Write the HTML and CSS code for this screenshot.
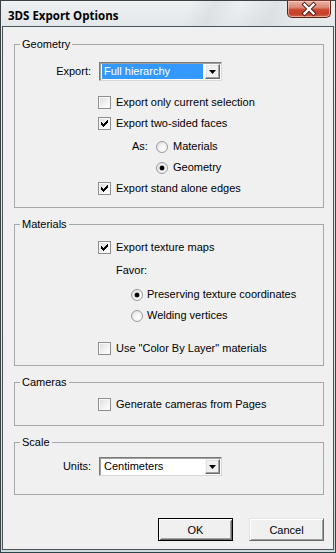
FILE: index.html
```html
<!DOCTYPE html>
<html>
<head>
<meta charset="utf-8">
<title>3DS Export Options</title>
<link rel="stylesheet" href="styles.css">
</head>
<body>
<div class="window">
  <div class="titlebar">
    <span class="title">3DS Export Options</span>
    <span class="close">
      <svg width="42" height="16" viewBox="0 0 42 16">
        <path d="M16.5 3.5 L25.5 12.5 M25.5 3.5 L16.5 12.5" stroke="#4a1a12" stroke-width="4.2" stroke-linecap="square"/>
        <path d="M16.5 3.5 L25.5 12.5 M25.5 3.5 L16.5 12.5" stroke="#ffffff" stroke-width="2.4" stroke-linecap="square"/>
      </svg>
    </span>
  </div>
  <div class="client">
    <fieldset class="group geom">
      <legend>Geometry</legend>
      <div class="combo-row first">
        <span class="lbl">Export:</span>
        <span class="combo">
          <span class="combo-text selected">Full hierarchy</span>
          <span class="combo-btn"><svg width="7" height="4" viewBox="0 0 7 4"><path d="M0 0 H7 L3.5 4 Z" fill="#000"/></svg></span>
        </span>
      </div>
      <div class="row ind-check gap11"><span class="cb"></span><span class="txt">Export only current selection</span></div>
      <div class="row ind-check"><span class="cb checked"><svg width="7" height="7" viewBox="0 0 7 7" shape-rendering="crispEdges"><path d="M6 0h1v1h-1z M5 1h2v1h-2z M0 2h1v1h-1z M4 2h3v1h-3z M0 3h2v1h-2z M3 3h3v1h-3z M0 4h5v1h-5z M1 5h3v1h-3z M2 6h1v1h-1z" fill="#000"/></svg></span><span class="txt">Export two-sided faces</span></div>
      <div class="row ind-as gap2"><span class="as">As:</span><span class="rb"></span><span class="txt">Materials</span></div>
      <div class="row ind-rb2"><span class="rb on"></span><span class="txt">Geometry</span></div>
      <div class="row ind-check"><span class="cb checked"><svg width="7" height="7" viewBox="0 0 7 7" shape-rendering="crispEdges"><path d="M6 0h1v1h-1z M5 1h2v1h-2z M0 2h1v1h-1z M4 2h3v1h-3z M0 3h2v1h-2z M3 3h3v1h-3z M0 4h5v1h-5z M1 5h3v1h-3z M2 6h1v1h-1z" fill="#000"/></svg></span><span class="txt">Export stand alone edges</span></div>
    </fieldset>

    <fieldset class="group mats">
      <legend>Materials</legend>
      <div class="row ind-check gap6"><span class="cb checked"><svg width="7" height="7" viewBox="0 0 7 7" shape-rendering="crispEdges"><path d="M6 0h1v1h-1z M5 1h2v1h-2z M0 2h1v1h-1z M4 2h3v1h-3z M0 3h2v1h-2z M3 3h3v1h-3z M0 4h5v1h-5z M1 5h3v1h-3z M2 6h1v1h-1z" fill="#000"/></svg></span><span class="txt">Export texture maps</span></div>
      <div class="row ind-favor gap2"><span>Favor:</span></div>
      <div class="row ind-pres gap3"><span class="rb on"></span><span class="txt rtxt">Preserving texture coordinates</span></div>
      <div class="row ind-pres"><span class="rb"></span><span class="txt rtxt">Welding vertices</span></div>
      <div class="row ind-check gap12"><span class="cb"></span><span class="txt">Use "Color By Layer" materials</span></div>
    </fieldset>

    <fieldset class="group cams">
      <legend>Cameras</legend>
      <div class="row ind-check gap5"><span class="cb"></span><span class="txt">Generate cameras from Pages</span></div>
    </fieldset>

    <fieldset class="group scale">
      <legend>Scale</legend>
      <div class="combo-row second">
        <span class="lbl">Units:</span>
        <span class="combo">
          <span class="combo-text">Centimeters</span>
          <span class="combo-btn"><svg width="7" height="4" viewBox="0 0 7 4"><path d="M0 0 H7 L3.5 4 Z" fill="#000"/></svg></span>
        </span>
      </div>
    </fieldset>

    <div class="buttons">
      <button class="btn default">OK</button>
      <button class="btn">Cancel</button>
    </div>
  </div>
</div>
</body>
</html>
```

FILE: styles.css
```css
* { box-sizing: border-box; }
html, body { margin: 0; padding: 0; }
body {
  width: 336px;
  height: 553px;
  overflow: hidden;
  font-family: "Liberation Sans", Arial, sans-serif;
  font-size: 11px;
  color: #000;
  background: #fff;
}
.window {
  width: 336px;
  height: 553px;
  border: 1px solid #3a4246;
  display: flex;
  flex-direction: column;
  background: linear-gradient(180deg, #e9ecee 0%, #dfe4e7 60%, #cfdadd 100%);
  border-right-color: #2e4a4e;
  border-bottom-color: #2b4448;
}
.titlebar {
  height: 25px;
  flex: none;
  display: flex;
  justify-content: space-between;
  align-items: flex-start;
  padding-left: 7px;
  background:
    linear-gradient(115deg, rgba(255,255,255,0) 55%, rgba(200,205,210,0.35) 62%, rgba(255,255,255,0) 70%, rgba(190,198,204,0.3) 80%, rgba(255,255,255,0) 88%),
    linear-gradient(180deg, #eef0f2 0%, #e4e8eb 100%);
}
.title {
  font-family: "Open Sans", "Noto Sans", sans-serif;
  font-weight: 700;
  font-size: 11.5px;
  line-height: 16px;
  margin-top: 7px;
  color: #000;
}
.close {
  width: 44px;
  height: 18px;
  margin-top: -1px;
  margin-right: 4px;
  border: 1px solid #5e2218;
  border-top: 1px solid #7a3a30;
  border-radius: 0 0 5px 5px;
  background: linear-gradient(180deg, #eab3a6 0%, #dc8a78 40%, #c9472f 55%, #c4402a 80%, #d2664f 100%);
  box-shadow: inset 0 0 0 1px rgba(255,220,210,0.55);
  display: flex;
  align-items: center;
  justify-content: center;
}
.close svg { display: block; }
.client {
  flex: 1;
  margin: 0 1px 2px 1px;
  border: 1px solid #4b5357;
  background: #f0f0f0;
  display: flex;
  flex-direction: column;
}
.group {
  margin: 10px 9px 0 11px;
  padding: 0;
  border: 1px solid #a7a7a7;
  min-width: 0;
}
.group.geom { margin-top: 11px; padding-bottom: 8px; }
.group.mats { padding-bottom: 6px; }
.group.cams { padding-bottom: 10px; }
.group.scale { padding-bottom: 18px; }
legend {
  margin-left: 5px;
  padding: 0 2px;
  line-height: 13px;
  font-size: 11px;
}
.row {
  height: 21px;
  display: flex;
  align-items: center;
  line-height: 13px;
  white-space: nowrap;
}
.gap2 { margin-top: 2px; }
.gap3 { margin-top: 3px; }
.gap5 { margin-top: 5px; }
.gap6 { margin-top: 6px; }
.gap11 { margin-top: 11px; }
.gap12 { margin-top: 12px; }
.ind-check { padding-left: 83px; }
.ind-as { padding-left: 117px; }
.ind-rb2 { padding-left: 141px; }
.ind-favor { padding-left: 101px; }
.ind-pres { padding-left: 116px; }
.as { width: 24px; }
.txt { margin-left: 5px; }
.rtxt { margin-left: 4px; }
.cb {
  width: 13px;
  height: 13px;
  flex: none;
  border: 1px solid #8e8f8f;
  background: linear-gradient(135deg, #dcdcdc 0%, #f3f3f3 60%, #ffffff 100%);
  box-shadow: inset 1px 1px 0 #f8f8f8, inset -1px -1px 0 #f8f8f8;
  display: flex;
  align-items: center;
  justify-content: center;
}
.cb svg { display: block; }
.rb {
  width: 12px;
  height: 12px;
  flex: none;
  border-radius: 50%;
  border: 1px solid #9a9a9a;
  background: radial-gradient(circle at 65% 65%, #ffffff 0%, #f2f2f2 45%, #d8d8d8 100%);
  display: flex;
  align-items: center;
  justify-content: center;
}
.rb.on::after {
  content: "";
  width: 4px;
  height: 4px;
  border-radius: 50%;
  background: #000;
  box-shadow: 0 0 0 0.5px #333;
}
.combo-row {
  display: flex;
  align-items: center;
  height: 19px;
}
.combo-row.first { margin-top: 11px; }
.combo-row.second { margin-top: 8px; }
.lbl {
  width: 76px;
  text-align: right;
  margin-right: 8px;
  line-height: 13px;
}
.combo {
  width: 123px;
  height: 19px;
  border: 1px solid;
  border-color: #7a7a7a #d8d8d8 #d8d8d8 #7a7a7a;
  box-shadow: inset 1px 1px 0 #a0a0a0;
  background: #fff;
  display: flex;
  align-items: stretch;
  padding: 1px 1px 1px 1px;
}
.combo-text {
  flex: 1;
  padding-left: 2px;
  margin-left: 1px;
  line-height: 15px;
  white-space: nowrap;
  overflow: hidden;
}
.combo-text.selected {
  background: #3399ff;
  color: #fff;
  margin-right: 2px;
}
.combo-btn {
  width: 15px;
  flex: none;
  background: #f0f0f0;
  border: 1px solid;
  border-color: #f8f8f8 #696969 #696969 #f8f8f8;
  box-shadow: inset -1px -1px 0 #a0a0a0, inset 1px 1px 0 #e3e3e3;
  display: flex;
  align-items: center;
  justify-content: center;
}
.combo-btn svg { display: block; }
.buttons {
  display: flex;
  justify-content: flex-end;
  gap: 16px;
  margin-top: 23px;
  padding-right: 9px;
}
.btn {
  width: 75px;
  height: 23px;
  font-family: "Liberation Sans", Arial, sans-serif;
  font-size: 11px;
  color: #000;
  padding: 0;
  background: #f0f0f0;
  border: 1px solid;
  border-color: #e3e3e3 #696969 #696969 #e3e3e3;
  box-shadow: inset 1px 1px 0 #ffffff, inset -1px -1px 0 #a0a0a0;
  border-radius: 0;
}
.btn.default {
  border: 1px solid #000;
  box-shadow: inset 1px 1px 0 #ffffff, inset -1px -1px 0 #696969, inset 2px 2px 0 #f0f0f0, inset -2px -2px 0 #a0a0a0;
}
```
